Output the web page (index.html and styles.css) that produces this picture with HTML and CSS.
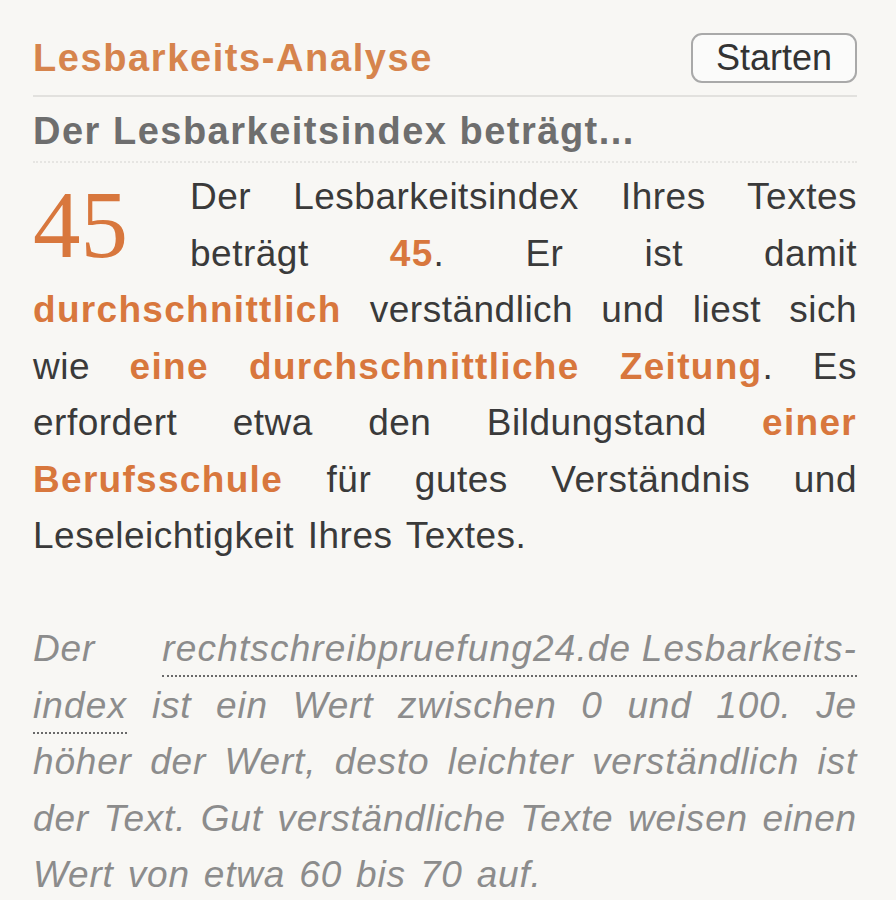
FILE: index.html
```html
<!DOCTYPE html>
<html lang="de">
<head>
<meta charset="utf-8">
<title>Lesbarkeits-Analyse</title>
<link rel="stylesheet" href="styles.css">
</head>
<body>
<div class="panel">
  <div class="head">
    <h1 class="title">Lesbarkeits-Analyse</h1>
    <button class="btn" type="button">Starten</button>
  </div>
  <h2 class="sub">Der Lesbarkeitsindex beträgt...</h2>
  <p class="result"><span class="score">45</span>Der Lesbarkeitsindex Ihres Textes beträgt <b class="hl">45</b>. Er ist damit <b class="hl">durchschnittlich</b> verständlich und liest sich wie <b class="hl">eine durchschnittliche Zeitung</b>. Es erfordert etwa den Bildungstand <b class="hl">einer Berufsschule</b> für gutes Verständnis und Leseleichtigkeit Ihres Textes.</p>
  <p class="note">Der <span class="abbr">rechtschreibpruefung24.de&#8197;Lesbarkeits-index</span> ist ein Wert zwischen 0 und 100. Je höher der Wert, desto leichter verständlich ist der Text. Gut verständliche Texte weisen einen Wert von etwa 60 bis 70 auf.</p>
</div>
</body>
</html>
```
FILE: styles.css
```css
html, body {
  margin: 0;
  padding: 0;
  background: #f8f7f4;
}
body {
  font-family: "Liberation Sans", Arial, sans-serif;
  color: #3a3a3a;
}
.panel {
  padding: 33px 39px 0 33px;
}
.head {
  display: flex;
  justify-content: space-between;
  align-items: center;
  padding-bottom: 12px;
  border-bottom: 2px solid #e2e1de;
}
.title {
  margin: 0;
  font-size: 38px;
  line-height: 50px;
  font-weight: bold;
  letter-spacing: 1.6px;
  color: #d6844d;
}
.btn {
  box-sizing: border-box;
  width: 166px;
  height: 50px;
  margin: 0;
  padding: 0;
  border: 2px solid #a9a9a9;
  border-radius: 11px;
  background: #fbfbfa;
  font-family: "Liberation Sans", Arial, sans-serif;
  font-size: 36px;
  color: #333;
}
.sub {
  margin: 6px 0 0;
  padding-bottom: 2px;
  font-size: 38px;
  line-height: 56px;
  font-weight: bold;
  letter-spacing: 1.5px;
  color: #6e6e6e;
  border-bottom: 2px dotted #e6e5e2;
}
.result {
  margin: 6px 0 0;
  font-size: 37px;
  line-height: 56.5px;
  letter-spacing: 0.5px;
  word-spacing: 3px;
  text-align: justify;
}
.score {
  float: left;
  width: 95px;
  margin: 9px 62px 0 0;
  font-family: "Liberation Serif", "Times New Roman", serif;
  font-size: 95px;
  line-height: 95px;
  letter-spacing: 0;
  color: #d8773d;
}
.hl {
  font-weight: bold;
  letter-spacing: 1.3px;
  color: #d8773d;
}
.note {
  margin: 56.5px 0 0;
  font-size: 37px;
  line-height: 56.5px;
  letter-spacing: 0.8px;
  word-spacing: 3px;
  font-style: italic;
  text-align: justify;
  color: #8c8c8c;
}
.abbr {
  padding-bottom: 6px;
  letter-spacing: 1.15px;
  border-bottom: 2px dotted #6a6a6a;
}
```
